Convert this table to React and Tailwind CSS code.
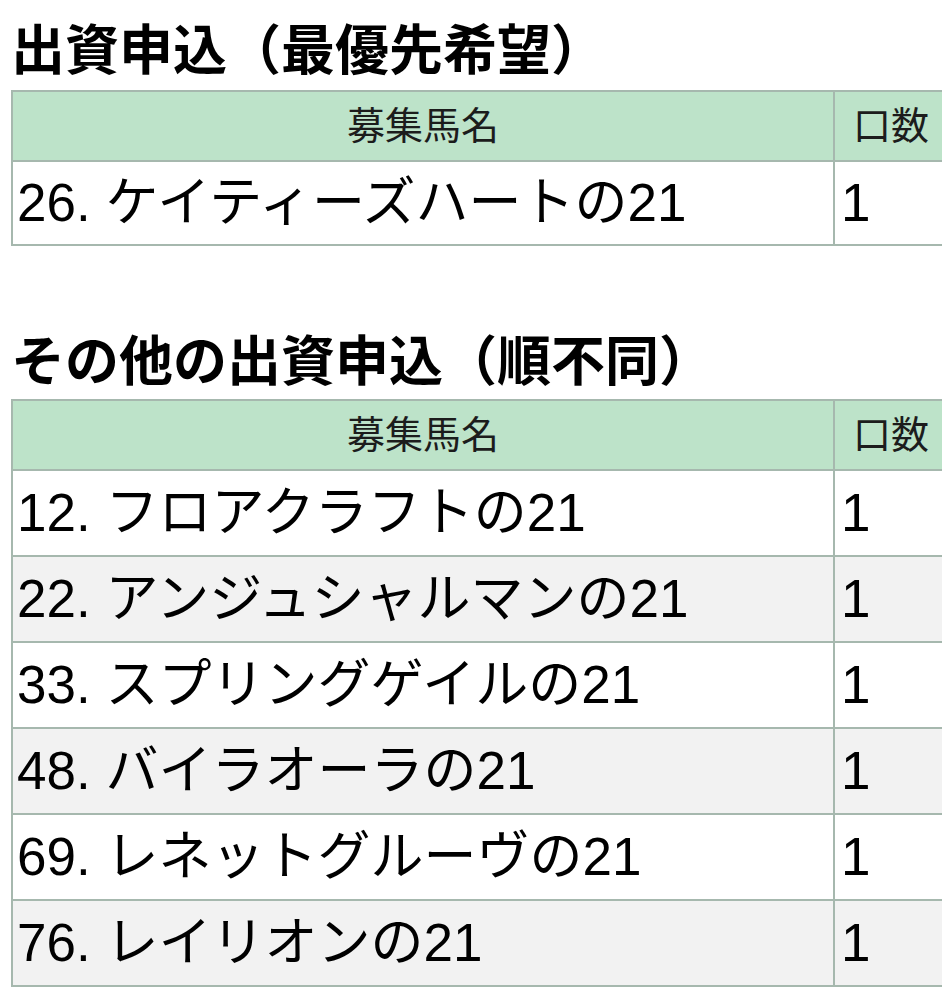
const first = [{ name: '26. ケイティーズハートの21', count: 1 }]

const others = [
  { name: '12. フロアクラフトの21', count: 1 },
  { name: '22. アンジュシャルマンの21', count: 1 },
  { name: '33. スプリングゲイルの21', count: 1 },
  { name: '48. バイラオーラの21', count: 1 },
  { name: '69. レネットグルーヴの21', count: 1 },
  { name: '76. レイリオンの21', count: 1 },
]

function EntryTable({ rows, rowH }) {
  return (
    <table className="w-[960px] border-collapse table-fixed">
      <colgroup>
        <col className="w-[822px]" />
        <col />
      </colgroup>
      <thead>
        <tr className="bg-[#bde3c9] h-[70px]">
          <th className="border-2 border-[#a6b8ae] font-normal text-[38px] leading-[44px] text-[#1c1c1c] text-center">募集馬名</th>
          <th className="border-2 border-[#a6b8ae] font-normal text-[38px] leading-[44px] text-[#1c1c1c] text-left pl-[18px]">口数</th>
        </tr>
      </thead>
      <tbody>
        {rows.map((r, i) => (
          <tr key={r.name} className={`${rowH} ${i % 2 === 1 ? 'bg-[#f2f2f2]' : 'bg-white'}`}>
            <td className="border-2 border-[#a6b8ae] text-[53px] leading-[62px] pl-[4px] whitespace-nowrap">{r.name}</td>
            <td className="border-2 border-[#a6b8ae] text-[53px] leading-[62px] pl-[6px]">{r.count}</td>
          </tr>
        ))}
      </tbody>
    </table>
  )
}

export default function App() {
  return (
    <div
      className="w-[942px] h-[987px] overflow-hidden bg-white text-black pl-[11px]"
      style={{ fontFamily: '"Liberation Sans", "Noto Sans CJK JP", sans-serif' }}
    >
      <h2 className="pt-[20px] mb-[8px] text-[54px] font-bold leading-[62px]">出資申込（最優先希望）</h2>
      <EntryTable rows={first} rowH="h-[84px]" />
      <h2 className="mt-[85px] mb-[6px] text-[54px] font-bold leading-[62px]">その他の出資申込（順不同）</h2>
      <EntryTable rows={others} rowH="h-[86px]" />
    </div>
  )
}
